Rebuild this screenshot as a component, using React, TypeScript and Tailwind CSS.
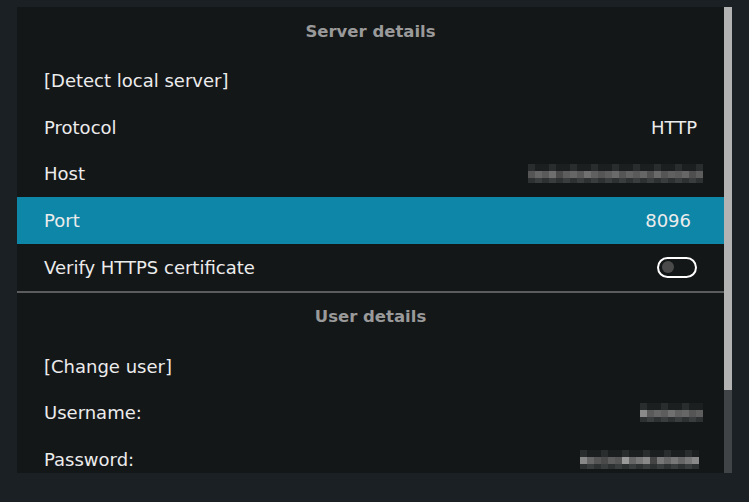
import React from "react";

const Blur = ({ shades }: { shades: string[] }) => (
  <div className="flex flex-col">
    <div className="flex">
      {shades.map((c, i) => (
        <span key={i} className="w-[7px] h-[7px]" style={{ background: i % 3 === 0 ? "#2a2d2e" : "#1c1f20" }} />
      ))}
    </div>
    <div className="flex">
      {shades.map((c, i) => (
        <span key={i} className="w-[7px] h-[7px]" style={{ background: c }} />
      ))}
    </div>
    <div className="flex">
      {shades.map((c, i) => (
        <span key={i} className="w-[7px] h-[5px]" style={{ background: i % 2 ? "#3a3d3e" : "#2e3132" }} />
      ))}
    </div>
  </div>
);

const Row = ({ label, right, active }: { label: string; right?: React.ReactNode; active?: boolean }) => (
  <div className={`h-[46.75px] shrink-0 flex items-center justify-between pl-[27px] pr-[27px] text-[18px] text-[#ececec] ${active ? "bg-[#0e86a8]" : ""}`}>
    <span>{label}</span>
    {right}
  </div>
);

export default function App() {
  const g1 = ["#555","#666","#5a5a5a","#6e6e6e","#4a4a4a","#5d5d5d","#666","#595959","#707070","#606060","#555","#5e5e5e","#6a6a6a","#555","#636363","#5a5a5a","#666","#515151","#6a6a6a","#555","#606060","#5b5b5b","#666","#4f4f4f","#5d5d5d"];
  const g2 = ["#8a8a8a","#5a5a5a","#666","#5d5d5d","#707070","#606060","#666","#555","#5e5e5e"];
  const g3 = ["#888","#666","#555","#4a4a4a","#5d5d5d","#555","#999","#666","#777","#888","#444","#777","#666","#777","#666","#777","#888"];
  return (
    <div className="w-[749px] h-[502px] bg-[#1a2023] pt-[7px] pl-[17px] flex" style={{ fontFamily: '"DejaVu Sans", sans-serif' }}>
      <div className="w-[707px] h-[466px] bg-[#141718] flex flex-col overflow-hidden">
        <div className="h-[50px] shrink-0 flex items-center justify-center text-[16.5px] text-[#9a9a9a] font-bold">Server details</div>
        <Row label="[Detect local server]" />
        <Row label="Protocol" right={<span>HTTP</span>} />
        <Row label="Host" right={<div className="-mr-[6px]"><Blur shades={g1} /></div>} />
        <Row label="Port" active right={<span className="mr-[6px]">8096</span>} />
        <Row label="Verify HTTPS certificate" right={
          <div className="w-[40px] h-[21px] rounded-full border-2 border-white flex items-center pl-[3px]">
            <div className="w-[12px] h-[12px] rounded-full bg-[#4a4a4a]" />
          </div>
        } />
        <div className="h-[2px] shrink-0 bg-[#5a5c5d]" />
        <div className="h-[50px] shrink-0 flex items-center justify-center text-[16.5px] text-[#9a9a9a] font-bold">User details</div>
        <Row label="[Change user]" />
        <Row label="Username:" right={<div className="-mr-[6px]"><Blur shades={g2} /></div>} />
        <Row label="Password:" right={<div className="-mr-[2px]"><Blur shades={g3} /></div>} />
      </div>
      <div className="w-[8px] h-[466px] bg-[#404446] flex flex-col">
        <div className="h-[383px] bg-[#b3b3b3]" />
      </div>
    </div>
  );
}
